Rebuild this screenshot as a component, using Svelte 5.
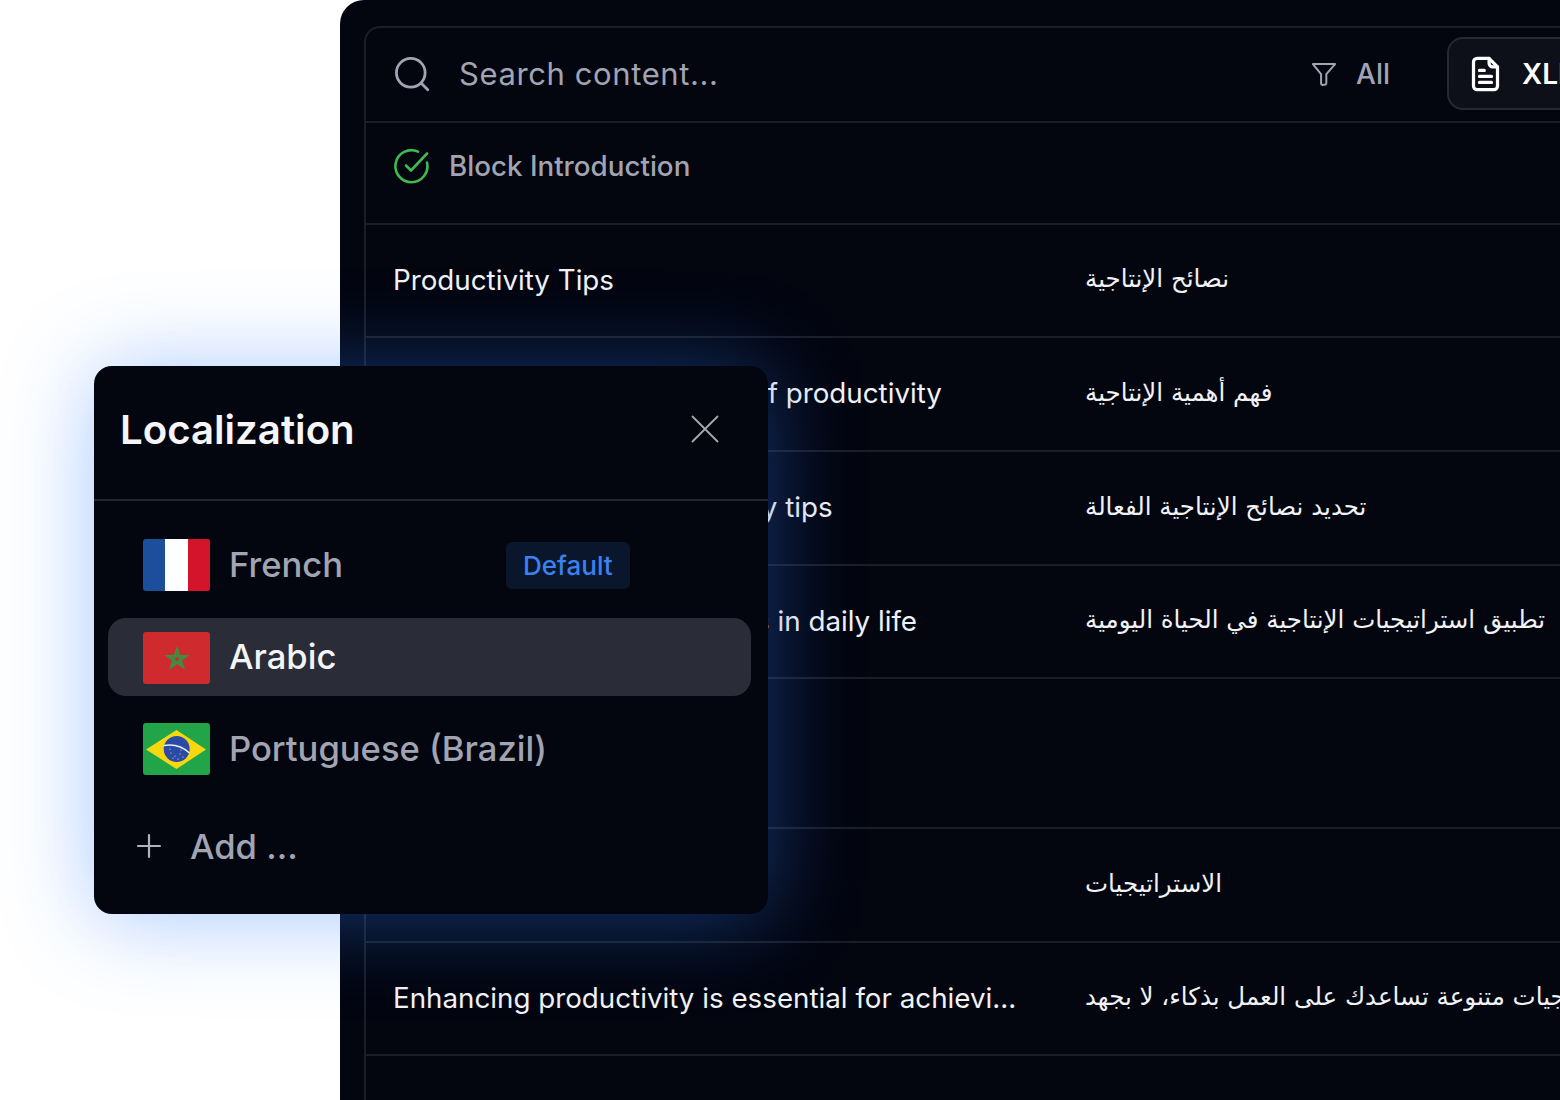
<script>
  const rows = [
    { source: 'Productivity Tips', target: 'نصائح الإنتاجية', height: 113 },
    { source: 'Understanding importance of productivity', target: 'فهم أهمية الإنتاجية', height: 114 },
    { source: 'Identify effective productivity tips', target: 'تحديد نصائح الإنتاجية الفعالة', height: 114 },
    { source: 'Apply productivity strategies in daily life', target: 'تطبيق استراتيجيات الإنتاجية في الحياة اليومية', height: 113 },
    { source: '', target: '', height: 150 },
    { source: 'Strategies', target: 'الاستراتيجيات', height: 114 },
    {
      source: 'Enhancing productivity is essential for achievi...',
      target: 'تعزيز الإنتاجية يعتمد على استراتيجيات متنوعة تساعدك على العمل بذكاء، لا بجهد',
      height: 113
    }
  ];

  const brazilStars = [[28, 30], [32, 33], [37, 31], [40, 34], [30, 35], [35, 36], [27, 26], [38, 27]];
</script>

<div class="page">
  <div class="panel">
    <div class="table">
      <div class="toolbar">
        <svg class="search-icon" viewBox="0 0 24 24" width="42" height="42" fill="none" stroke="#a1a4b2" stroke-width="1.6" stroke-linecap="round">
          <circle cx="11.3" cy="11.3" r="8.2" />
          <path d="M17.3 17.3 21 21" />
        </svg>
        <span class="search-text">Search content...</span>
        <div class="filter">
          <svg viewBox="0 0 24 24" width="28" height="28" fill="none" stroke="#a1a4b2" stroke-width="1.7" stroke-linejoin="round">
            <path d="M2.5 3.500h19l-7.500 8.600V20a1.200 1.200 0 0 1-1.200 1.200h-1.600A1.200 1.200 0 0 1 9.500 20v-7.900z" />
          </svg>
          <span>All</span>
        </div>
        <div class="export">
          <svg viewBox="0 0 24 30" width="29" height="36" fill="none" stroke="#fff" stroke-width="2.7" stroke-linecap="round" stroke-linejoin="round">
            <path d="M5 2h10l7 7v16a3 3 0 0 1-3 3H5a3 3 0 0 1-3-3V5a3 3 0 0 1 3-3z" />
            <path d="M15 2v4a3 3 0 0 0 3 3h4" />
            <path d="M7 12h4M7 17h10M7 22h10" />
          </svg>
          <span>XLIFF</span>
        </div>
      </div>

      <div class="block-row">
        <svg viewBox="0 0 36 36" width="36" height="36" fill="none" stroke="#3fb950" stroke-width="2.6" stroke-linecap="round" stroke-linejoin="round">
          <path d="M33 14.500A16 16 0 1 1 24 3.600" />
          <path d="M12 17.500l5 5L33 5.500" />
        </svg>
        <span>Block Introduction</span>
      </div>

      {#each rows as row}
        <div class="row" style="height: {row.height}px">
          <div class="source">{row.source}</div>
          <div class="target"><span dir="rtl">{row.target}</span></div>
        </div>
      {/each}
    </div>
  </div>

  <div class="popup">
    <div class="popup-head">
      <h2>Localization</h2>
      <svg viewBox="0 0 30 30" width="30" height="30" fill="none" stroke="#a9a9ad" stroke-width="1.8" stroke-linecap="round">
        <path d="M2.500 2.500l25 25M27.500 2.500l-25 25" />
      </svg>
    </div>

    <div class="lang-list">
      <div class="lang">
        <svg class="flag" viewBox="0 0 67 52" width="67" height="52">
          <rect width="67" height="52" fill="#1d4e9c" />
          <rect x="22" width="23" height="52" fill="#fff" />
          <rect x="45" width="22" height="52" fill="#d3142a" />
        </svg>
        <span class="lang-name">French</span>
        <span class="badge">Default</span>
      </div>

      <div class="lang active">
        <svg class="flag" viewBox="0 0 67 52" width="67" height="52">
          <rect width="67" height="52" fill="#cf2a2e" />
          <path d="M34 17.500l5.800 17.400-14.900-10.800h18.200L28.200 34.900z" fill="none" stroke="#3a8f45" stroke-width="2.400" />
        </svg>
        <span class="lang-name">Arabic</span>
      </div>

      <div class="lang">
        <svg class="flag" viewBox="0 0 67 52" width="67" height="52">
          <rect width="67" height="52" fill="#22a549" />
          <path d="M33.500 7 63 26.500 33.500 46 3 26.500z" fill="#f7d80f" />
          <circle cx="33.700" cy="26" r="13" fill="#2a4aa5" />
          <path d="M21 22.500c9-1.500 18.500 1 25.500 7.500" fill="none" stroke="#e8edf5" stroke-width="1.600" />
          {#each brazilStars as [x, y]}
            <circle cx={x} cy={y} r="0.6" fill="#dfe6f5" />
          {/each}
        </svg>
        <span class="lang-name">Portuguese (Brazil)</span>
      </div>
    </div>

    <div class="add">
      <svg viewBox="0 0 26 26" width="26" height="26" fill="none" stroke="#b0b2bc" stroke-width="2.200" stroke-linecap="round">
        <path d="M13 2v22M2 13h22" />
      </svg>
      <span>Add ...</span>
    </div>
  </div>
</div>

<style>
  :global(body) {
    margin: 0;
    background: #fff;
  }

  .page {
    position: relative;
    height: 1100px;
    padding-left: 340px;
    overflow: hidden;
    font-family: Inter, 'Liberation Sans', sans-serif;
    box-sizing: border-box;
  }

  .panel {
    height: 1100px;
    padding: 26px 0 0 24px;
    box-sizing: border-box;
    background: #03050f;
    border-top-left-radius: 24px;
    overflow: hidden;
  }

  .table {
    width: 1300px;
    height: 1100px;
    border-top: 2px solid #1b1e29;
    border-left: 2px solid #1b1e29;
    border-top-left-radius: 16px;
  }

  .toolbar {
    display: flex;
    align-items: center;
    height: 91px;
    padding: 0 0 2px 25px;
    border-bottom: 2px solid #1b1e29;
    color: #a1a4b2;
  }

  .search-icon {
    flex-shrink: 0;
  }

  .search-text {
    margin-left: 26px;
    font-size: 31px;
    letter-spacing: 0.6px;
    white-space: nowrap;
  }

  .filter {
    display: flex;
    align-items: center;
    gap: 18px;
    margin-left: auto;
    margin-right: 57px;
    font-size: 28px;
    font-weight: 500;
  }

  .export {
    display: flex;
    align-items: center;
    gap: 22px;
    width: 219px;
    height: 73px;
    padding-left: 22px;
    border: 2px solid #262934;
    border-radius: 16px;
    background: #0d0f19;
    color: #fff;
    font-size: 28px;
    font-weight: 600;
    box-sizing: border-box;
  }

  .block-row {
    display: flex;
    align-items: center;
    gap: 19px;
    height: 86px;
    padding: 0 0 14px 28px;
    border-bottom: 2px solid #1b1e29;
    color: #a1a4b2;
    font-size: 27.75px;
    font-weight: 500;
  }

  .row {
    display: flex;
    align-items: center;
    padding-left: 27px;
    border-bottom: 2px solid #1b1e29;
    box-sizing: border-box;
    color: #f1f2f5;
    font-size: 27.75px;
  }

  .source {
    width: 692px;
    flex-shrink: 0;
    margin-top: -2px;
    white-space: nowrap;
  }

  .target {
    font-family: 'DejaVu Sans', sans-serif;
    font-size: 24.5px;
    white-space: nowrap;
    margin-top: -4px;
  }

  .popup {
    position: absolute;
    left: 94px;
    top: 366px;
    width: 674px;
    height: 548px;
    background: #03050f;
    border-radius: 18px;
    box-shadow: 0 4px 90px rgba(45, 125, 255, 0.42);
    overflow: hidden;
  }

  .popup-head {
    display: flex;
    align-items: center;
    justify-content: space-between;
    height: 126px;
    padding: 0 48px 7px 26px;
    border-bottom: 2px solid #25272f;
  }

  h2 {
    margin: 0;
    color: #f6f6f8;
    font-size: 40.2px;
    font-weight: 600;
  }

  .lang-list {
    display: flex;
    flex-direction: column;
    gap: 14px;
    padding: 25px 17px 0 14px;
  }

  .lang {
    display: flex;
    align-items: center;
    height: 78px;
    padding-left: 35px;
    border-radius: 18px;
    color: #a1a4b2;
    font-size: 34.6px;
    font-weight: 500;
  }

  .lang.active {
    background: #2a2c38;
    color: #f3f4f7;
  }

  .lang.active .flag {
    margin-top: 2px;
  }

  .flag {
    flex-shrink: 0;
    border-radius: 3px;
  }

  .lang-name {
    margin: -3px 0 0 19px;
  }

  .badge {
    margin-left: 163px;
    padding: 8px 17px;
    border-radius: 6px;
    background: #0a162c;
    color: #3b82f0;
    font-size: 26px;
  }

  .add {
    display: flex;
    align-items: center;
    gap: 28px;
    margin-top: 37px;
    padding-left: 42px;
    color: #a1a4b2;
    font-size: 34.6px;
    font-weight: 500;
  }
</style>
